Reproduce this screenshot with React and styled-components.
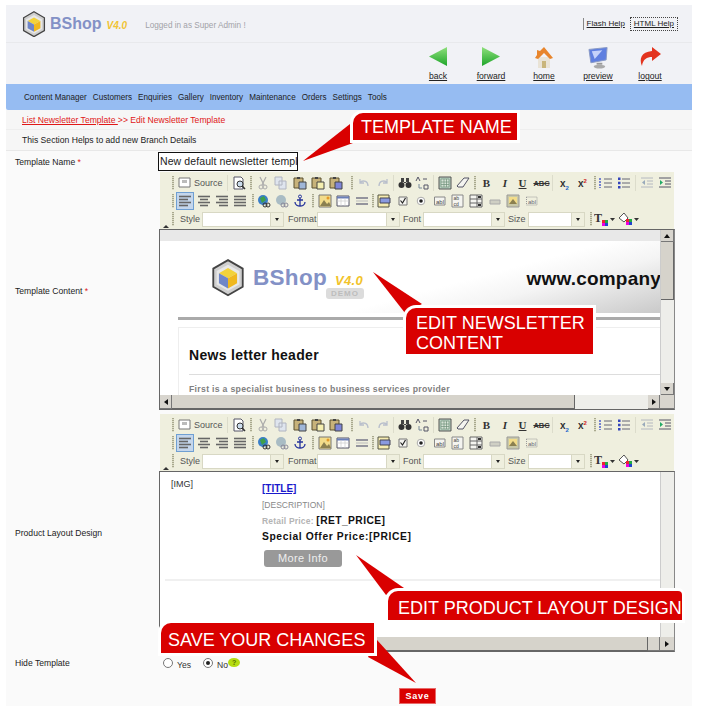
import React from 'react';
import styled, { createGlobalStyle } from 'styled-components';

const Global = createGlobalStyle`
  html, body { margin: 0; padding: 0; background: #fff; }
  body { font-family: "Liberation Sans", Arial, sans-serif; font-size: 8.6px; color: #222; }
`;

const Page = styled.div`
  position: relative;
  width: 702px;
  height: 726px;
  padding: 5px 10px 0 6px;
  box-sizing: border-box;
  overflow: hidden;
`;
const Panel = styled.div`
  width: 686px;
  height: 701px;
  background: #fafafa;
  display: flex;
  flex-direction: column;
`;
const TopBar = styled.header`
  height: 37px;
  flex: none;
  background: #f1f2f6;
  border-bottom: 1px solid #e8e9ec;
  display: flex;
  align-items: center;
  padding: 0 14px 0 16px;
`;
const BrandMark = styled.div`
  display: flex;
  align-items: center;
  margin-top: 1px;
`;
const BrandName = styled.span`
  font-size: 16px;
  font-weight: 700;
  color: #8391c6;
  margin-left: 4px;
`;
const BrandVersion = styled.span`
  font-size: 10px;
  font-weight: 700;
  font-style: italic;
  color: #f0c437;
  margin-left: 5px;
  margin-top: 3px;
`;
const LoggedIn = styled.span`
  font-size: 8.2px;
  color: #a2a2a8;
  margin-left: 18px;
  margin-top: 3px;
`;
const HelpLinks = styled.div`
  margin-left: auto;
  display: flex;
  align-items: center;
`;
const HelpLink = styled.a`
  color: #222;
  font-size: 8px;
  text-decoration: underline;
  padding: 1px 3px;
  line-height: 10px;
  border-left: 1px solid #888;
`;
const BoxedHelpLink = styled(HelpLink)`
  border: 1px dotted #444;
  margin-left: 2px;
`;
const NavRow = styled.nav`
  height: 41px;
  flex: none;
  background: #f1f2f6;
  display: flex;
  justify-content: flex-end;
  padding-right: 29px;
`;
const NavItem = styled.a`
  width: ${p => p.$w}px;
  margin-left: ${p => p.$ml}px;
  display: flex;
  flex-direction: column;
  align-items: center;
  color: #222;
  font-size: 8.6px;
  text-decoration: underline;
  padding-top: 4px;
`;
const NavIcon = styled.div`
  height: 24px;
  svg { display: block; }
`;
const MenuBar = styled.div`
  height: 26px;
  flex: none;
  background: #96bcf2;
  display: flex;
  align-items: center;
  padding-left: 18px;
  gap: 6px;
  font-size: 8.15px;
  color: #222;
  border-bottom-left-radius: 2px;
`;
const Crumbs = styled.div`
  height: 19px;
  flex: none;
  background: #f6f6f6;
  border-bottom: 1px solid #eee;
  padding-left: 16px;
  display: flex;
  align-items: center;
  color: #e01818;
  font-size: 8.6px;
  white-space: pre;
`;
const CrumbLink = styled.a`
  color: #e01818;
  text-decoration: underline;
`;
const SectionNote = styled.div`
  height: 20px;
  flex: none;
  background: #f6f6f6;
  border-bottom: 1px solid #e8e8e8;
  padding-left: 16px;
  display: flex;
  align-items: center;
  font-size: 8.6px;
  color: #222;
`;
const Form = styled.div`
  display: grid;
  grid-template-columns: 152px 516px;
  align-items: center;
`;
const Label = styled.div`
  padding-left: 9px;
  padding-top: ${p => p.$pt || 0}px;
  font-size: 8.6px;
  color: #222;
  i { color: #d22; font-style: normal; }
`;
const NameInput = styled.div`
  width: 137px;
  height: 17px;
  margin: 1px 0;
  border: 1px solid #111;
  background: #fff;
  font-size: 10.5px;
  letter-spacing: 0.1px;
  line-height: 17px;
  color: #222;
  white-space: nowrap;
  overflow: hidden;
  padding-left: 1px;
`;
const Editor = styled.div`
  margin-left: 1px;
  margin-top: ${p => p.$mt}px;
  width: 516px;
`;
const Toolbar = styled.div`
  height: 57px;
  margin-left: 1px;
  width: 514px;
  background: #efefde;
  position: relative;
  padding-top: 2px;
  box-sizing: border-box;
`;
const ToolRow = styled.div`
  height: 18px;
  display: flex;
  align-items: center;
  font-size: 9px;
  color: #555;
`;
const Tool = styled.div`
  flex: none;
  width: ${p => p.$w}px;
  margin-left: ${p => p.$ml}px;
  display: flex;
  align-items: center;
  justify-content: ${p => (p.$start ? 'flex-start' : 'center')};
  white-space: nowrap;
  svg { display: block; flex: none; }
`;
const ToolGlyph = styled.b`
  font-family: ${p => (p.$serif ? '"Liberation Serif", serif' : '"Liberation Sans", sans-serif')};
  font-size: ${p => p.$fs}px;
  font-style: ${p => (p.$italic ? 'italic' : 'normal')};
  text-decoration: ${p => p.$deco || 'none'};
  color: #333;
  sub, sup { font-size: 6px; line-height: 0; }
  sub { color: #26c; }
  sup { color: #c22; }
`;
const Grip = styled.div`
  flex: none;
  width: 2px;
  height: 14px;
  margin-left: ${p => p.$ml}px;
  background: repeating-linear-gradient(to bottom, #a9a98e 0 1px, #dcdcc8 1px 2px);
`;
const Sep = styled.div`
  flex: none;
  width: 1px;
  height: 16px;
  margin-left: ${p => p.$ml}px;
  background: #dcdccb;
`;
const ActiveTool = styled(Tool)`
  height: 18px;
  background: #c4d6ec;
  outline: 1px solid #6f9fd2;
  outline-offset: -1px;
`;
const Combo = styled.div`
  flex: none;
  margin-left: ${p => p.$ml}px;
  width: ${p => p.$w}px;
  height: 15px;
  display: flex;
  background: #fff;
  border: 1px solid #d8d8c4;
  box-sizing: border-box;
`;
const ComboArrow = styled.div`
  margin-left: auto;
  width: 12px;
  background: #efefde;
  border-left: 1px solid #d8d8c4;
  display: flex;
  align-items: center;
  justify-content: center;
  &::after {
    content: '';
    border: 2.5px solid transparent;
    border-top: 3px solid #222;
    border-bottom: 0;
  }
`;
const Collapse = styled.div`
  position: absolute;
  left: 3px;
  bottom: 1px;
  border: 3px solid transparent;
  border-bottom: 3px solid #333;
  border-top: 0;
`;
const Frame = styled.div`
  height: ${p => p.$h}px;
  border: 1px solid #666;
  border-right-color: #888;
  background: #fff;
  box-sizing: border-box;
  display: grid;
  grid-template-columns: 1fr 14px;
  grid-template-rows: 1fr 14px;
`;
const FrameBody = styled.div`
  overflow: hidden;
  min-width: 0;
  min-height: 0;
  position: relative;
`;
const VScroll = styled.div`
  background: #eeeeea;
  display: flex;
  flex-direction: column;
  border-left: 1px solid #ccc;
`;
const HScroll = styled.div`
  background: #eeeeea;
  display: flex;
`;
const ScrollBtn = styled.div`
  width: ${p => (p.$h ? '12px' : '100%')};
  height: ${p => (p.$h ? '100%' : '12px')};
  flex: none;
  box-sizing: border-box;
  background: #d8d5ce;
  border-right: 1px solid #777;
  border-bottom: 1px solid #777;
  display: flex;
  align-items: center;
  justify-content: center;
  margin-left: ${p => (p.$auto ? 'auto' : '0')};
  margin-top: ${p => (p.$autoY ? 'auto' : '0')};
`;
const Thumb = styled.div`
  background: #d6d3cb;
  box-sizing: border-box;
  border-right: 1px solid #666;
  border-bottom: 1px solid #666;
  flex: none;
  width: ${p => (p.$w ? p.$w + 'px' : '100%')};
  height: ${p => (p.$h ? p.$h + 'px' : '100%')};
`;
const Corner = styled.div`
  background: #d8d5ce;
  border-bottom: 1px solid #777;
  display: flex;
  align-items: center;
  justify-content: center;
`;
const Mail = styled.div`
  width: 501px;
`;
const MailBand = styled.div`
  height: 11px;
  background: #e8e8e8;
`;
const MailHeader = styled.div`
  margin-left: 11px;
  height: 72px;
  display: flex;
  align-items: center;
  padding-left: 40px;
  background: linear-gradient(165deg, #fff 58%, #f4f4f4 72%, #c9c9c9 100%);
`;
const MailLogo = styled.div`
  display: flex;
  align-items: center;
  margin-top: 2px;
`;
const MailBrand = styled.div`
  position: relative;
  margin-left: 8px;
  font-size: 22.5px;
  font-weight: 700;
  color: #8391c6;
  letter-spacing: 0.3px;
`;
const MailVersion = styled.span`
  font-size: 13px;
  font-style: italic;
  color: #f2c32a;
  margin-left: 8px;
`;
const DemoPill = styled.span`
  position: absolute;
  right: -1px;
  bottom: -8px;
  width: 38px;
  height: 11px;
  background: #dcdcdc;
  border-radius: 3px;
  font-size: 8px;
  font-weight: 700;
  line-height: 11px;
  color: #bdbdbd;
  text-align: center;
  letter-spacing: 1px;
`;
const MailSite = styled.span`
  margin-left: auto;
  margin-top: 4px;
  font-size: 19px;
  font-weight: 700;
  color: #111;
  white-space: nowrap;
  letter-spacing: 0.2px;
`;
const MailRule = styled.div`
  margin: 4px 0 0 18px;
  height: 3px;
  background: #aaa;
`;
const MailBox = styled.div`
  margin: 7px 0 0 18px;
  border: 1px solid #eee;
  border-right: 0;
  padding: 19px 0 0 10px;
  height: 90px;
`;
const MailTitle = styled.h3`
  margin: 0;
  font-size: 14px;
  line-height: 17px;
  font-weight: 700;
  color: #111;
  letter-spacing: 0.3px;
`;
const MailLine = styled.div`
  height: 1px;
  background: #ddd;
  margin-top: 10px;
`;
const MailText = styled.p`
  margin: 9px 0 0;
  font-size: 8.7px;
  font-weight: 700;
  color: #808080;
  letter-spacing: 0.3px;
`;
const ProductBody = styled.div`
  position: relative;
  height: 166px;
  padding: 7px 0 0 11px;
  box-sizing: border-box;
  display: grid;
  grid-template-columns: 91px 1fr;
`;
const ImgTag = styled.div`
  font-size: 9px;
  color: #333;
  line-height: 10px;
`;
const ProductInfo = styled.div`
  display: flex;
  flex-direction: column;
  align-items: flex-start;
  font-size: 9px;
`;
const TitleLink = styled.a`
  font-size: 10px;
  font-weight: 700;
  color: #1a1acc;
  text-decoration: underline;
  line-height: 12px;
  margin-top: 4px;
`;
const Desc = styled.div`
  font-size: 8.5px;
  color: #888;
  margin-top: 5px;
  line-height: 11px;
`;
const PriceLine = styled.div`
  margin-top: ${p => p.$mt}px;
  line-height: 14px;
  font-size: 10.3px;
  font-weight: 700;
  letter-spacing: ${p => p.$ls}px;
  color: #111;
  white-space: pre;
  span { font-size: 8.5px; color: #b4b4b4; letter-spacing: 0.2px; }
`;
const MoreBtn = styled.div`
  margin-top: 6px;
  margin-left: 2px;
  width: 78px;
  height: 17px;
  background: #999;
  border-radius: 3px;
  color: #eee;
  font-size: 11px;
  line-height: 17px;
  text-align: center;
  letter-spacing: 0.4px;
`;
const ProductRule = styled.div`
  position: absolute;
  left: 5px;
  right: 0;
  top: 107px;
  height: 2px;
  background: #f0f0f0;
`;
const RadioRow = styled.div`
  display: flex;
  align-items: center;
  height: 20px;
  font-size: 8.6px;
  color: #333;
  padding-left: 5px;
  margin-top: 2px;
`;
const Radio = styled.span`
  width: 8px;
  height: 8px;
  margin: -3px 2px 0 ${p => p.$ml}px;
  border-radius: 50%;
  border: 1px solid #777;
  background: #fff;
  display: flex;
  align-items: center;
  justify-content: center;
  &::after {
    content: '';
    width: 4px;
    height: 4px;
    border-radius: 50%;
    background: ${p => (p.$on ? '#222' : 'transparent')};
  }
`;
const RadioText = styled.span`
  margin-left: 2px;
  margin-top: 2px;
`;
const Hint = styled.span`
  width: 12px;
  height: 9px;
  border-radius: 50%;
  background: #b5dc10;
  color: #557000;
  font-size: 7px;
  font-weight: 700;
  line-height: 9px;
  text-align: center;
  margin-top: -3px;
`;
const SaveRow = styled.div`
  display: flex;
  padding-left: 393px;
  margin-top: 14px;
`;
const SaveBtn = styled.button`
  width: 37px;
  height: 16px;
  padding: 0;
  border: 1px solid #e86a6a;
  background: #d90000;
  color: #fff;
  font-family: "Liberation Sans", Arial, sans-serif;
  font-size: 9px;
  font-weight: 700;
  letter-spacing: 0.7px;
`;
const Callout = styled.div`
  position: absolute;
  left: ${p => p.$x}px;
  top: ${p => p.$y}px;
  width: ${p => p.$w}px;
  height: ${p => p.$h}px;
  box-sizing: border-box;
  background: #d90000;
  color: #fff;
  font-size: 18px;
  line-height: 20px;
  padding: ${p => p.$pad};
  box-shadow: 0 0 0 3px #fff;
  border-top-left-radius: 10px;
  border-top-right-radius: ${p => (p.$tr ? 4 : 0)}px;
  white-space: pre;
`;
const Pointers = styled.svg`
  position: absolute;
  left: 0;
  top: 0;
  pointer-events: none;
`;

const Logo = ({ s = 30 }) => (
  <svg width={s} height={s * 1.1} viewBox="0 0 30 33">
    <path d="M15 1 L28 8.5 V24.5 L15 32 L2 24.5 V8.5 Z" fill="#cfcfcf" stroke="#444" strokeWidth="1.6" />
    <path d="M15 5 L25 10.5 V22.5 L15 28 L5 22.5 V10.5 Z" fill="#e8e8e8" />
    <path d="M15 8 L23 12.5 L15 17 L7 12.5 Z" fill="#f2d23a" />
    <path d="M15 17 L23 12.5 V21.5 L15 26 Z" fill="#f0b81e" />
    <path d="M15 17 L7 12.5 V21.5 L15 26 Z" fill="#6f86c8" />
  </svg>
);
const Back = () => <svg width="18" height="19" viewBox="0 0 18 19"><defs><linearGradient id="g1" x1="0" y1="0" x2="0" y2="1"><stop offset="0" stopColor="#8fe07c" /><stop offset="1" stopColor="#1ea52a" /></linearGradient></defs><path d="M0 9.5 L18 0 V19 Z" fill="url(#g1)" /></svg>;
const Forward = () => <svg width="18" height="19" viewBox="0 0 18 19"><path d="M18 9.5 L0 0 V19 Z" fill="url(#g1)" /></svg>;
const Home = () => (
  <svg width="18" height="21" viewBox="0 0 18 21">
    <path d="M3 10 H15 V21 H3 Z" fill="#e9e3d6" />
    <path d="M9 0 L18 11 L15 12 L9 6 L3 12 L0 11 L2 8 V3 L5 4 Z" fill="#e8852c" />
    <path d="M7 14 H11 V21 H7 Z" fill="#c9b57a" />
  </svg>
);
const Preview = () => (
  <svg width="21" height="22" viewBox="0 0 22 22">
    <path d="M1 2 L20 0 L19 13 L3 16 Z" fill="#5f7fe0" stroke="#8a9ac4" />
    <path d="M4 4 L15 3 L7 12 Z" fill="#c5d2fa" />
    <path d="M9 16 H15 V18 H9 Z" fill="#999" />
    <ellipse cx="12" cy="20" rx="6" ry="2" fill="#aaa" />
  </svg>
);
const Logout = () => (
  <svg width="23" height="20" viewBox="0 0 23 20">
    <path d="M13 0 L22 7 L13 14 V10 C8 10 4 12 3 19 C0 12 2 5 13 4 Z" fill="#e3341f" />
  </svg>
);

const P = ({ children }) => <svg width="14" height="14" viewBox="0 0 14 14">{children}</svg>;
const paste = (c) => (
  <P>
    <path d="M1 2 H10 V12 H1 Z" fill="#c7b27a" stroke="#5a5030" />
    <path d="M4 1 H7 V3 H4 Z" fill="#444" />
    <path d="M6 6 H13 V13 H6 Z" fill={c} stroke="#444" />
  </P>
);
const lines = (rows) => (
  <P>
    {rows.map(([x1, x2], i) => <path key={i} d={`M${x1} ${2.5 + i * 3} H${x2}`} stroke="#666" strokeWidth="1.6" />)}
  </P>
);
const ICONS = {
  source: <P><path d="M1 2 H12 V11 H1 Z" fill="#fff" stroke="#777" /><path d="M4 4 H9 V7 H4 Z" fill="#bbb" /></P>,
  preview: <P><path d="M2 1 H9 L11 3 V13 H2 Z" fill="#fff" stroke="#556" /><circle cx="8" cy="8" r="3" fill="#cde" stroke="#333" /><path d="M10 10 L13 13" stroke="#333" strokeWidth="1.6" /></P>,
  cut: <P><path d="M4 1 L8 9 M10 1 L6 9" stroke="#aaa" strokeWidth="1.2" /><circle cx="5" cy="11" r="2" fill="none" stroke="#aaa" /><circle cx="9" cy="11" r="2" fill="none" stroke="#aaa" /></P>,
  copy: <P><path d="M1 1 H8 V9 H1 Z M5 5 H12 V13 H5 Z" fill="#dfe5ee" stroke="#b0b4c0" /></P>,
  paste: paste('#9fb6d8'),
  pasteT: paste('#f5efb0'),
  pasteW: paste('#7f86d8'),
  undo: <P><path d="M11 10 C11 5 7 4 3 6 M3 3 V7 H7" fill="none" stroke="#b9bfcc" strokeWidth="1.3" /></P>,
  redo: <P><path d="M3 10 C3 5 7 4 11 6 M11 3 V7 H7" fill="none" stroke="#b9bfcc" strokeWidth="1.3" /></P>,
  find: <P><circle cx="3.5" cy="9" r="3" fill="#333" /><circle cx="10.5" cy="9" r="3" fill="#333" /><path d="M3 2 H6 V7 H8 V2 H11 V6 H3 Z" fill="#444" /></P>,
  replace: <P><path d="M1 5 L3 1 L5 5 M8 3 H12 M9 13 H13 V9 H9 Z" fill="none" stroke="#556" /><path d="M4 8 V12 H7" fill="none" stroke="#789" /></P>,
  selall: <P><path d="M1 1 H13 V13 H1 Z" fill="#b8cfc0" stroke="#555" /><path d="M3 3 H11 V11 H3 Z M3 6 H11 M3 8.5 H11 M6 3 V11 M8.5 3 V11" fill="#d8e4d8" stroke="#6f8f78" strokeWidth=".7" /></P>,
  eraser: <P><path d="M1 10 L8 2 H13 L7 11 H2 Z" fill="#f4f4f0" stroke="#556" /></P>,
  ol: <P><path d="M1 2 V12" stroke="#5566cc" strokeWidth="1.6" strokeDasharray="2 1" /><path d="M5 3 H13 M5 7 H13 M5 11 H13" stroke="#667" /></P>,
  ul: <P><path d="M1 1.5 H3.5 V4 H1 Z M1 5.8 H3.5 V8.3 H1 Z M1 10 H3.5 V12.5 H1 Z" fill="#3344bb" /><path d="M5 3 H13 M5 7 H13 M5 11 H13" stroke="#667" /></P>,
  outdent: <P><path d="M1 2 H13 M7 5 H13 M7 8 H13 M1 11 H13" stroke="#b4b8c0" /><path d="M5 4 V9 L2 6.5 Z" fill="#9ab" /></P>,
  indent: <P><path d="M1 2 H13 M7 5 H13 M7 8 H13 M1 11 H13" stroke="#556" /><path d="M2 4 V9 L5 6.5 Z" fill="#2a6" /></P>,
  left: lines([[1, 13], [1, 10], [1, 13], [1, 10]]),
  center: lines([[1, 13], [3, 11], [1, 13], [3, 11]]),
  right: lines([[1, 13], [4, 13], [1, 13], [4, 13]]),
  justify: lines([[1, 13], [1, 13], [1, 13], [1, 13]]),
  link: <P><circle cx="6" cy="6" r="5" fill="#3a7fc8" /><path d="M3 4 L7 2 L9 6 L5 9 Z" fill="#3fa04a" /><circle cx="8" cy="11" r="2" fill="none" stroke="#333" /><circle cx="11" cy="11" r="2" fill="none" stroke="#333" /></P>,
  unlink: <P><circle cx="6" cy="6" r="5" fill="#a9bcc4" /><circle cx="8" cy="11" r="2" fill="none" stroke="#889" /><circle cx="11" cy="11" r="2" fill="none" stroke="#889" /></P>,
  anchor: <P><circle cx="7" cy="2.5" r="1.5" fill="none" stroke="#26349c" /><path d="M7 4 V12 M4 6 H10 M2 8 C2 11 5 12 7 12 C9 12 12 11 12 8" fill="none" stroke="#26349c" strokeWidth="1.3" /></P>,
  image: <P><path d="M1 1 H13 V13 H1 Z" fill="#f2dc8a" stroke="#777" /><path d="M2 12 L6 6 L9 10 L11 8 L13 12 Z" fill="#8b8050" /><circle cx="10" cy="4" r="1.5" fill="#e49a2a" /></P>,
  table: <P><path d="M1 2 H13 V12 H1 Z" fill="#fff" stroke="#556" /><path d="M1 3.5 H13" stroke="#6a7fb8" strokeWidth="2" /><path d="M1 7 H13 M5 4 V12 M9 4 V12" stroke="#ccc" strokeWidth=".7" /></P>,
  hr: <P><path d="M1 4 H13 M1 10 H13" stroke="#778" strokeWidth="1.6" /><path d="M1 7 H13" stroke="#bbb" /></P>,
  form: <P><path d="M1 1 H12 V13 H1 Z" fill="#f6ecb0" stroke="#554" /><path d="M3 4 H13 V9 H3 Z" fill="#8a9ae0" stroke="#445" /></P>,
  check: <P><path d="M3 3 H11 V11 H3 Z" fill="#f4f4f0" stroke="#777" /><path d="M4.5 6.5 L6.5 9 L9.5 4" fill="none" stroke="#222" strokeWidth="1.2" /></P>,
  radio: <P><circle cx="7" cy="7" r="3.8" fill="#fff" stroke="#aaa" /><circle cx="7" cy="7" r="1.8" fill="#222" /></P>,
  field: <P><path d="M1.5 3 H12 V11 H1.5 Z" fill="#f4f4f0" stroke="#888" /><text x="3" y="9.5" fontSize="6" fontFamily="Liberation Sans" fill="#444">abl</text></P>,
  area: <P><path d="M1 1 H12 V13 H1 Z" fill="#f4f4f0" stroke="#888" /><text x="2.5" y="6" fontSize="5" fontFamily="Liberation Sans" fill="#444">ab</text><text x="2.5" y="11.5" fontSize="5" fontFamily="Liberation Sans" fill="#444">cd</text></P>,
  select: <P><path d="M1 1 H13 V13 H1 Z" fill="#f4f4f0" stroke="#666" /><path d="M8 1 V13 M1 5 H13 M1 9 H13" stroke="#666" /><path d="M9 2 H12 V4 H9 Z M9 10 H12 V12 H9 Z" fill="#333" /></P>,
  button: <P><path d="M2 6 H12 V10 H2 Z" fill="#cfcfc4" stroke="#aaa" /></P>,
  imgbtn: <P><path d="M1 1 H13 V13 H1 Z" fill="#c8c8a8" stroke="#999" /><path d="M3 3 H11 V10 H3 Z" fill="#f2dc8a" /><path d="M3 10 L7 5 L11 10 Z" fill="#8b8050" /></P>,
  hidden: <P><path d="M1.5 3 H12 V11 H1.5 Z" fill="none" stroke="#999" strokeDasharray="1 1" /><text x="3" y="9.5" fontSize="6" fontFamily="Liberation Sans" fill="#667">abl</text></P>,
  textcolor: <svg width="16" height="14" viewBox="0 0 16 14"><text x="0" y="10" fontSize="12" fontWeight="700" fontFamily="Liberation Serif" fill="#333">T</text><path d="M8 8 H11 V11 H8 Z" fill="#e23" /><path d="M11 8 H14 V11 H11 Z" fill="#2a4" /><path d="M8 11 H11 V14 H8 Z" fill="#e0d" /><path d="M11 11 H14 V14 H11 Z" fill="#24c" /></svg>,
  bgcolor: <svg width="16" height="14" viewBox="0 0 16 14"><path d="M1 6 L6 1 L10 6 L6 10 Z" fill="#fff" stroke="#555" /><path d="M8 7 H11 V10 H8 Z" fill="#e23" /><path d="M11 7 H14 V10 H11 Z" fill="#2a4" /><path d="M8 10 H11 V13 H8 Z" fill="#e0d" /><path d="M11 10 H14 V13 H11 Z" fill="#24c" /></svg>,
  caret: <svg width="6" height="14" viewBox="0 0 6 14"><path d="M0 6 H5 L2.5 9 Z" fill="#333" /></svg>
};

const row1 = [
  ['grip', 172, 2], ['icon', 178, 13, 'source'], ['text', 194, 28, 'Source'], ['sep', 227, 1],
  ['icon', 232, 14, 'preview'], ['grip', 250, 2], ['icon', 256, 14, 'cut'], ['icon', 274, 14, 'copy'],
  ['icon', 293, 14, 'paste'], ['icon', 311, 14, 'pasteT'], ['icon', 329, 14, 'pasteW'], ['grip', 351, 2],
  ['icon', 357, 14, 'undo'], ['icon', 376, 14, 'redo'], ['sep', 393, 1], ['icon', 398, 14, 'find'],
  ['icon', 415, 14, 'replace'], ['sep', 433, 1], ['icon', 438, 14, 'selall'], ['icon', 456, 14, 'eraser'],
  ['grip', 474, 2], ['bold', 482, 9, 'B'], ['ital', 501, 8, 'I'], ['under', 518, 9, 'U'], ['strike', 534, 15, 'ABC'],
  ['sep', 552, 1], ['sub', 559, 11, 'x'], ['sup', 577, 11, 'x'], ['grip', 594, 2], ['icon', 599, 14, 'ol'],
  ['icon', 617, 14, 'ul'], ['sep', 635, 1], ['icon', 640, 14, 'outdent'], ['icon', 658, 14, 'indent']
];
const row2 = [
  ['grip', 172, 2], ['active', 176, 18, 'left'], ['icon', 197, 14, 'center'], ['icon', 215, 14, 'right'], ['icon', 233, 14, 'justify'],
  ['grip', 252, 2], ['icon', 257, 14, 'link'], ['icon', 275, 14, 'unlink'], ['icon', 293, 14, 'anchor'],
  ['grip', 312, 2], ['icon', 318, 14, 'image'], ['icon', 336, 14, 'table'], ['icon', 355, 14, 'hr'],
  ['grip', 372, 2], ['icon', 377, 14, 'form'], ['icon', 396, 14, 'check'], ['icon', 414, 14, 'radio'],
  ['icon', 433, 14, 'field'], ['icon', 451, 14, 'area'], ['icon', 469, 14, 'select'], ['icon', 488, 14, 'button'],
  ['icon', 506, 14, 'imgbtn'], ['icon', 525, 14, 'hidden']
];
const row3 = [
  ['grip', 172, 2], ['text', 180, 20, 'Style'], ['combo', 202, 82], ['text', 288, 27, 'Format'], ['combo', 317, 83],
  ['text', 403, 18, 'Font'], ['combo', 423, 82], ['text', 508, 18, 'Size'], ['combo', 528, 57], ['grip', 590, 2],
  ['icon', 594, 16, 'textcolor'], ['icon', 610, 6, 'caret'], ['icon', 618, 16, 'bgcolor'], ['icon', 634, 6, 'caret']
];

const Item = ({ it, ml }) => {
  const [k, , w, v] = it;
  if (k === 'grip') return <Grip $ml={ml} />;
  if (k === 'sep') return <Sep $ml={ml} />;
  if (k === 'icon') return <Tool $w={w} $ml={ml}>{ICONS[v]}</Tool>;
  if (k === 'active') return <ActiveTool $w={w} $ml={ml}>{ICONS[v]}</ActiveTool>;
  if (k === 'text') return <Tool $w={w} $ml={ml} $start>{v}</Tool>;
  if (k === 'combo') return <Combo $w={w} $ml={ml}><ComboArrow /></Combo>;
  if (k === 'bold') return <Tool $w={w} $ml={ml}><ToolGlyph $serif $fs={11}>{v}</ToolGlyph></Tool>;
  if (k === 'ital') return <Tool $w={w} $ml={ml}><ToolGlyph $serif $italic $fs={11}>{v}</ToolGlyph></Tool>;
  if (k === 'under') return <Tool $w={w} $ml={ml}><ToolGlyph $serif $deco="underline" $fs={11}>{v}</ToolGlyph></Tool>;
  if (k === 'strike') return <Tool $w={w} $ml={ml}><ToolGlyph $deco="line-through" $fs={7.5}>{v}</ToolGlyph></Tool>;
  if (k === 'sub') return <Tool $w={w} $ml={ml}><ToolGlyph $fs={10}>{v}<sub>2</sub></ToolGlyph></Tool>;
  if (k === 'sup') return <Tool $w={w} $ml={ml}><ToolGlyph $fs={10}>{v}<sup>2</sup></ToolGlyph></Tool>;
  return null;
};

const Row = ({ items }) => {
  let end = 160;
  return (
    <ToolRow>
      {items.map((it, i) => {
        const ml = it[1] - end;
        end = it[1] + it[2];
        return <Item key={i} it={it} ml={ml} />;
      })}
    </ToolRow>
  );
};

const EditorToolbar = () => (
  <Toolbar>
    <Row items={row1} />
    <Row items={row2} />
    <Row items={row3} />
    <Collapse />
  </Toolbar>
);

const tri = (d) => <svg width="6" height="8" viewBox="0 0 6 8"><path d={d} fill="#111" /></svg>;

const menu = ['Content Manager', 'Customers', 'Enquiries', 'Gallery', 'Inventory', 'Maintenance', 'Orders', 'Settings', 'Tools'];

export default function App() {
  return (
    <Page>
      <Global />
      <Panel>
        <TopBar>
          <BrandMark>
            <Logo s={24} />
            <BrandName>BShop</BrandName>
            <BrandVersion>V4.0</BrandVersion>
          </BrandMark>
          <LoggedIn>Logged in as Super Admin !</LoggedIn>
          <HelpLinks>
            <HelpLink>Flash Help</HelpLink>
            <BoxedHelpLink>HTML Help</BoxedHelpLink>
          </HelpLinks>
        </TopBar>
        <NavRow>
          <NavItem $w={24} $ml={0}><NavIcon><Back /></NavIcon>back</NavItem>
          <NavItem $w={34} $ml={24}><NavIcon><Forward /></NavIcon>forward</NavItem>
          <NavItem $w={24} $ml={24}><NavIcon><Home /></NavIcon>home</NavItem>
          <NavItem $w={34} $ml={25}><NavIcon><Preview /></NavIcon>preview</NavItem>
          <NavItem $w={26} $ml={22}><NavIcon><Logout /></NavIcon>logout</NavItem>
        </NavRow>
        <MenuBar>{menu.map(m => <span key={m}>{m}</span>)}</MenuBar>
        <Crumbs><CrumbLink>List Newsletter Template </CrumbLink>{'>> Edit Newsletter Template'}</Crumbs>
        <SectionNote>This Section Helps to add new Branch Details</SectionNote>
        <Form>
          <Label>Template Name <i>*</i></Label>
          <NameInput>New default newsletter template</NameInput>

          <Label>Template Content <i>*</i></Label>
          <Editor $mt={0}>
            <EditorToolbar />
            <Frame $h={181}>
              <FrameBody>
                <Mail>
                  <MailBand />
                  <MailHeader>
                    <MailLogo>
                      <Logo s={34} />
                      <MailBrand>BShop<MailVersion>V4.0</MailVersion><DemoPill>DEMO</DemoPill></MailBrand>
                    </MailLogo>
                    <MailSite>www.company</MailSite>
                  </MailHeader>
                  <MailRule />
                  <MailBox>
                    <MailTitle>News letter header</MailTitle>
                    <MailLine />
                    <MailText>First is a specialist business to business services provider</MailText>
                  </MailBox>
                </Mail>
              </FrameBody>
              <VScroll>
                <ScrollBtn>{tri('M0 6 L3 2 L6 6 Z')}</ScrollBtn>
                <Thumb $h={58} />
                <ScrollBtn $autoY>{tri('M0 2 L3 6 L6 2 Z')}</ScrollBtn>
              </VScroll>
              <HScroll>
                <ScrollBtn $h>{tri('M5 1 L1 4 L5 7 Z')}</ScrollBtn>
                <Thumb $w={403} />
                <ScrollBtn $h $auto>{tri('M1 1 L5 4 L1 7 Z')}</ScrollBtn>
              </HScroll>
              <Corner />
            </Frame>
          </Editor>

          <Label $pt={4}>Product Layout Design</Label>
          <Editor $mt={4}>
            <EditorToolbar />
            <Frame $h={181}>
              <FrameBody>
                <ProductBody>
                  <ImgTag>[IMG]</ImgTag>
                  <ProductInfo>
                    <TitleLink>[TITLE]</TitleLink>
                    <Desc>[DESCRIPTION]</Desc>
                    <PriceLine $mt={3} $ls={0.4}><span>Retail Price: </span>[RET_PRICE]</PriceLine>
                    <PriceLine $mt={2} $ls={0.6}>Special Offer Price:[PRICE]</PriceLine>
                    <MoreBtn>More Info</MoreBtn>
                  </ProductInfo>
                  <ProductRule />
                </ProductBody>
              </FrameBody>
              <VScroll />
              <HScroll>
                <Thumb $w={488} />
                <ScrollBtn $h $auto />
              </HScroll>
              <Corner>{tri('M1 1 L5 4 L1 7 Z')}</Corner>
            </Frame>
          </Editor>

          <Label>Hide Template</Label>
          <RadioRow>
            <Radio $ml={0} />
            <RadioText>Yes</RadioText>
            <Radio $ml={12} $on />
            <RadioText>No</RadioText>
            <Hint>?</Hint>
          </RadioRow>
        </Form>
        <SaveRow><SaveBtn>Save</SaveBtn></SaveRow>
      </Panel>

      <Pointers width="702" height="726" viewBox="0 0 702 726">
        <g fill="#d90000">
          <path d="M303 161 L350 124 L353 143 Z" />
          <path d="M373 272 L422 304 L405 313 Z" />
          <path d="M356 555 L404 588 L386 595 Z" />
          <path d="M377 640 L416 683 L368 657 Z" />
        </g>
      </Pointers>
      <Callout $x={353} $y={113} $w={164} $h={27} $pad="4px 0 0 8px">TEMPLATE NAME</Callout>
      <Callout $x={406} $y={308} $w={187} $h={46} $pad="5px 0 0 10px">{'EDIT NEWSLETTER\nCONTENT'}</Callout>
      <Callout $x={388} $y={591} $w={294} $h={29} $pad="7px 0 0 10px" $tr>EDIT PRODUCT LAYOUT DESIGN</Callout>
      <Callout $x={161} $y={623} $w={213} $h={30} $pad="7px 0 0 7px">SAVE YOUR CHANGES</Callout>
    </Page>
  );
}
